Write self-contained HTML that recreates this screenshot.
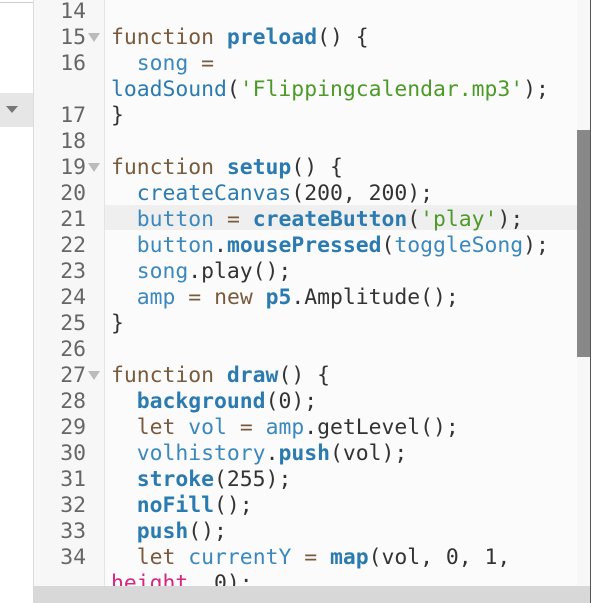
<!DOCTYPE html>
<html><head><meta charset="utf-8"><style>
body{margin:0;width:600px;height:603px;overflow:hidden;background:#fff;position:relative;font-family:"DejaVu Sans Mono","Liberation Mono",monospace;}
#left{position:absolute;left:0;top:0;width:33px;height:603px;background:#fff;border-right:1px solid #ddd;}
#left .top{position:absolute;left:0;top:2px;width:33px;height:1px;background:#ccc}
#left .sel{position:absolute;left:0;top:93px;width:33px;height:34px;background:#e6e6e6}
#left .tri{position:absolute;left:6px;top:106px;width:0;height:0;border-left:6px solid transparent;border-right:6px solid transparent;border-top:7px solid #777}
#gut{position:absolute;left:34px;top:0;width:70px;height:586px;background:#f7f7f7;border-right:1px solid #e4e4e4}
#code{position:absolute;left:105px;top:0;width:472px;height:586px;background:#fbfbfb}
#hl{position:absolute;left:105px;top:205px;width:472px;height:25px;background:#efefef}
#sb{position:absolute;left:577px;top:130px;width:13px;height:227px;background:#888}
#sbtrack{position:absolute;left:577px;top:0;width:13px;height:586px;background:#f7f7f7}
#rb{position:absolute;left:590px;top:0;width:1px;height:603px;background:#555}
#bot{position:absolute;left:33px;top:586px;width:557px;height:17px;background:#d8d8d8}
.ln{position:absolute;left:34px;width:52px;text-align:right;font-size:21.4px;color:#666;line-height:26px}
.f{position:absolute;left:88px;width:0;height:0;border-left:6px solid transparent;border-right:6px solid transparent;border-top:9px solid #bbb}
.c{position:absolute;left:111px;font-size:21.4px;line-height:26px;color:#333;white-space:pre}
.k{color:#7a5a3c}.b{color:#2b7bb0;font-weight:bold}.v{color:#3a88be}.s{color:#4c9a28}.m{color:#d6277f}.fn{color:#2b7bb0}
</style></head><body>
<div id="left"><div class="top"></div><div class="sel"></div><div class="tri"></div></div>
<div id="gut"></div><div id="code"></div><div id="sbtrack"></div><div id="hl"></div><div id="sb"></div><div id="rb"></div><div id="bot"></div>

<div class="ln" style="top:-1px">14</div>
<div class="ln" style="top:25px">15</div><div class="f" style="top:33px"></div>
<div class="c" style="top:25px"><span class="k">function</span> <span class="b">preload</span>() {</div>
<div class="ln" style="top:51px">16</div>
<div class="c" style="top:51px">  <span class="v">song</span> <span class="k">=</span></div>
<div class="c" style="top:77px"><span class="fn">loadSound</span>(<span class="s">'Flippingcalendar.mp3'</span>);</div>
<div class="ln" style="top:103px">17</div>
<div class="c" style="top:103px">}</div>
<div class="ln" style="top:129px">18</div>
<div class="ln" style="top:155px">19</div><div class="f" style="top:163px"></div>
<div class="c" style="top:155px"><span class="k">function</span> <span class="b">setup</span>() {</div>
<div class="ln" style="top:181px">20</div>
<div class="c" style="top:181px">  <span class="fn">createCanvas</span>(200, 200);</div>
<div class="ln" style="top:207px">21</div>
<div class="c" style="top:207px">  <span class="v">button</span> <span class="k">=</span> <span class="b">createButton</span>(<span class="s">'play'</span>);</div>
<div class="ln" style="top:233px">22</div>
<div class="c" style="top:233px">  <span class="v">button</span>.<span class="b">mousePressed</span>(<span class="v">toggleSong</span>);</div>
<div class="ln" style="top:259px">23</div>
<div class="c" style="top:259px">  <span class="v">song</span>.play();</div>
<div class="ln" style="top:285px">24</div>
<div class="c" style="top:285px">  <span class="v">amp</span> <span class="k">=</span> <span class="k">new</span> <span class="b">p5</span>.Amplitude();</div>
<div class="ln" style="top:311px">25</div>
<div class="c" style="top:311px">}</div>
<div class="ln" style="top:337px">26</div>
<div class="ln" style="top:363px">27</div><div class="f" style="top:371px"></div>
<div class="c" style="top:363px"><span class="k">function</span> <span class="b">draw</span>() {</div>
<div class="ln" style="top:389px">28</div>
<div class="c" style="top:389px">  <span class="b">background</span>(0);</div>
<div class="ln" style="top:415px">29</div>
<div class="c" style="top:415px">  <span class="k">let</span> <span class="v">vol</span> <span class="k">=</span> <span class="v">amp</span>.getLevel();</div>
<div class="ln" style="top:441px">30</div>
<div class="c" style="top:441px">  <span class="v">volhistory</span>.<span class="b">push</span>(vol);</div>
<div class="ln" style="top:467px">31</div>
<div class="c" style="top:467px">  <span class="b">stroke</span>(255);</div>
<div class="ln" style="top:493px">32</div>
<div class="c" style="top:493px">  <span class="b">noFill</span>();</div>
<div class="ln" style="top:519px">33</div>
<div class="c" style="top:519px">  <span class="b">push</span>();</div>
<div class="ln" style="top:545px">34</div>
<div class="c" style="top:545px">  <span class="k">let</span> <span class="v">currentY</span> <span class="k">=</span> <span class="b">map</span>(vol, 0, 1,</div>
<div class="c" style="top:571px;height:15px;overflow:hidden"><span class="m">height</span>, 0);</div>
</body></html>
